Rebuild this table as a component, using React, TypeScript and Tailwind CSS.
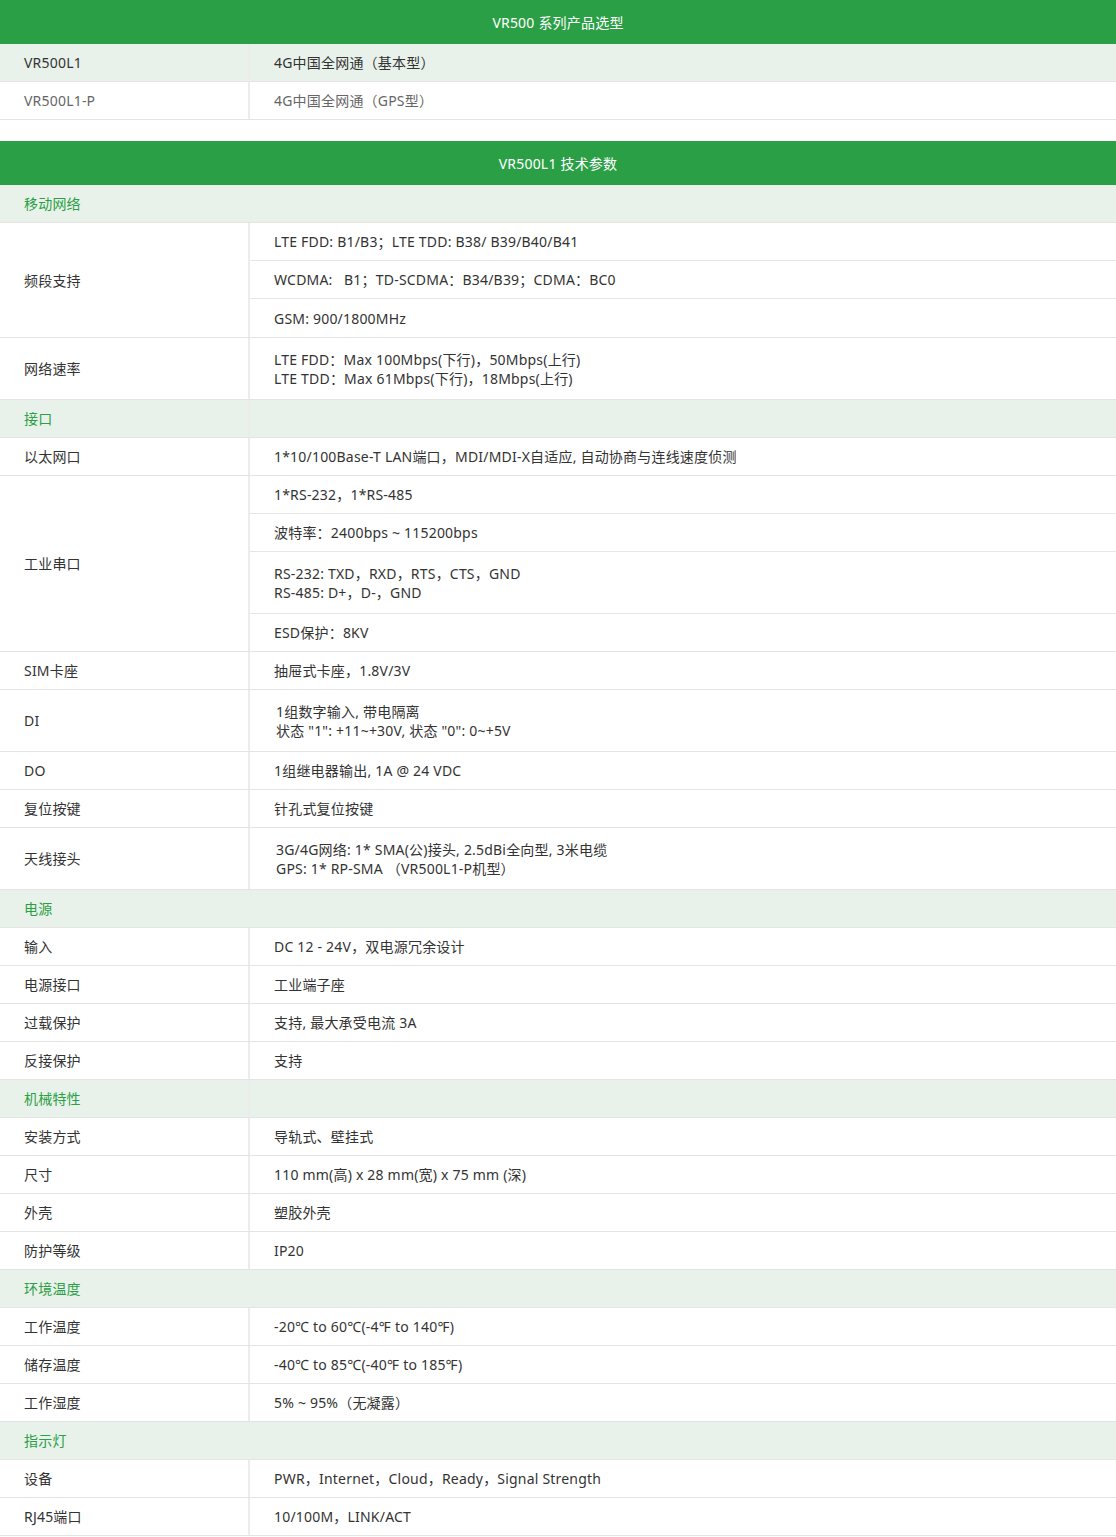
import React from "react";

type Row =
  | { kind: "cat"; label: string; split?: boolean }
  | { kind: "row"; label: string; values: (string | string[])[]; pl?: string; extra?: boolean };

const rows: Row[] = [
  { kind: "cat", label: "移动网络" },
  {
    kind: "row",
    label: "频段支持",
    values: [
      "LTE FDD: B1/B3；LTE TDD: B38/ B39/B40/B41",
      "WCDMA:   B1；TD-SCDMA：B34/B39；CDMA：BC0",
      "GSM: 900/1800MHz",
    ],
    extra: true,
  },
  {
    kind: "row",
    label: "网络速率",
    values: [["LTE FDD：Max 100Mbps(下行)，50Mbps(上行)", "LTE TDD：Max 61Mbps(下行)，18Mbps(上行)"]],
  },
  { kind: "cat", label: "接口", split: true },
  { kind: "row", label: "以太网口", values: ["1*10/100Base-T LAN端口，MDI/MDI-X自适应, 自动协商与连线速度侦测"] },
  {
    kind: "row",
    label: "工业串口",
    values: [
      "1*RS-232，1*RS-485",
      "波特率：2400bps ~ 115200bps",
      ["RS-232: TXD，RXD，RTS，CTS，GND", "RS-485: D+，D-，GND"],
      "ESD保护：8KV",
    ],
  },
  { kind: "row", label: "SIM卡座", values: ["抽屉式卡座，1.8V/3V"] },
  {
    kind: "row",
    label: "DI",
    values: [["1组数字输入, 带电隔离", "状态 \"1\": +11~+30V, 状态 \"0\": 0~+5V"]],
    pl: "pl-[26px]",
  },
  { kind: "row", label: "DO", values: ["1组继电器输出, 1A @ 24 VDC"] },
  { kind: "row", label: "复位按键", values: ["针孔式复位按键"] },
  {
    kind: "row",
    label: "天线接头",
    values: [["3G/4G网络: 1* SMA(公)接头, 2.5dBi全向型, 3米电缆", "GPS: 1* RP-SMA （VR500L1-P机型）"]],
    pl: "pl-[26px]",
  },
  { kind: "cat", label: "电源" },
  { kind: "row", label: "输入", values: ["DC 12 - 24V，双电源冗余设计"] },
  { kind: "row", label: "电源接口", values: ["工业端子座"] },
  { kind: "row", label: "过载保护", values: ["支持, 最大承受电流 3A"] },
  { kind: "row", label: "反接保护", values: ["支持"] },
  { kind: "cat", label: "机械特性", split: true },
  { kind: "row", label: "安装方式", values: ["导轨式、壁挂式"] },
  { kind: "row", label: "尺寸", values: ["110 mm(高) x 28 mm(宽) x 75 mm (深)"] },
  { kind: "row", label: "外壳", values: ["塑胶外壳"] },
  { kind: "row", label: "防护等级", values: ["IP20"] },
  { kind: "cat", label: "环境温度" },
  { kind: "row", label: "工作温度", values: ["-20℃ to 60℃(-4℉ to 140℉)"] },
  { kind: "row", label: "储存温度", values: ["-40℃ to 85℃(-40℉ to 185℉)"] },
  { kind: "row", label: "工作湿度", values: ["5% ~ 95%（无凝露）"] },
  { kind: "cat", label: "指示灯" },
  { kind: "row", label: "设备", values: ["PWR，Internet，Cloud，Ready，Signal Strength"] },
  { kind: "row", label: "RJ45端口", values: ["10/100M，LINK/ACT"] },
];

function Cell({ v, pl, last, extra }: { v: string | string[]; pl?: string; last: boolean; extra?: boolean }) {
  const multi = Array.isArray(v);
  const h = multi ? "h-[61px] leading-[19px]" : last && extra ? "h-[38px] leading-[21px]" : "h-[37px] leading-[21px]";
  return (
    <div
      className={`flex flex-col justify-center ${pl ?? "pl-6"} ${h} ${last ? "" : "box-content border-b border-[#e6e6e6]"} whitespace-pre`}
    >
      {multi ? v.map((l, i) => <div key={i}>{l}</div>) : v}
    </div>
  );
}

export default function App() {
  return (
    <div
      className="w-[1116px] bg-white text-[14px] tracking-[0.2px] text-[#333]"
      style={{ fontFamily: '"Noto Sans", "Noto Sans CJK SC", sans-serif' }}
    >
      <div className="h-[44px] bg-[#2b9f46] text-white flex items-center justify-center">VR500 系列产品选型</div>
      <div className="flex h-[38px] bg-[#e8f2ea] border-b border-[#e4e4e4]">
        <div className="w-[250px] pl-6 flex items-center border-r-2 border-[#ececec]">VR500L1</div>
        <div className="flex-1 pl-6 flex items-center">4G中国全网通（基本型）</div>
      </div>
      <div className="flex h-[38px] border-b border-[#e4e4e4] text-[#666]">
        <div className="w-[250px] pl-6 flex items-center border-r-2 border-[#ececec]">VR500L1-P</div>
        <div className="flex-1 pl-6 flex items-center">4G中国全网通（GPS型）</div>
      </div>
      <div className="h-[21px]" />
      <div className="h-[44px] bg-[#2b9f46] text-white flex items-center justify-center">VR500L1 技术参数</div>
      {rows.map((r, i) =>
        r.kind === "cat" ? (
          <div key={i} className="flex h-[38px] bg-[#e8f2ea] border-b border-[#e4e4e4] text-[#2b9f46]">
            <div className={`w-[250px] pl-6 flex items-center ${r.split ? "border-r-2 border-[#ececec]" : ""}`}>{r.label}</div>
            <div className="flex-1" />
          </div>
        ) : (
          <div key={i} className="flex border-b border-[#e4e4e4]">
            <div className="w-[250px] pl-6 flex items-center border-r-2 border-[#ececec]">{r.label}</div>
            <div className="flex-1 flex flex-col">
              {r.values.map((v, j) => (
                <Cell key={j} v={v} pl={r.pl} extra={r.extra} last={j === r.values.length - 1} />
              ))}
            </div>
          </div>
        )
      )}
    </div>
  );
}
